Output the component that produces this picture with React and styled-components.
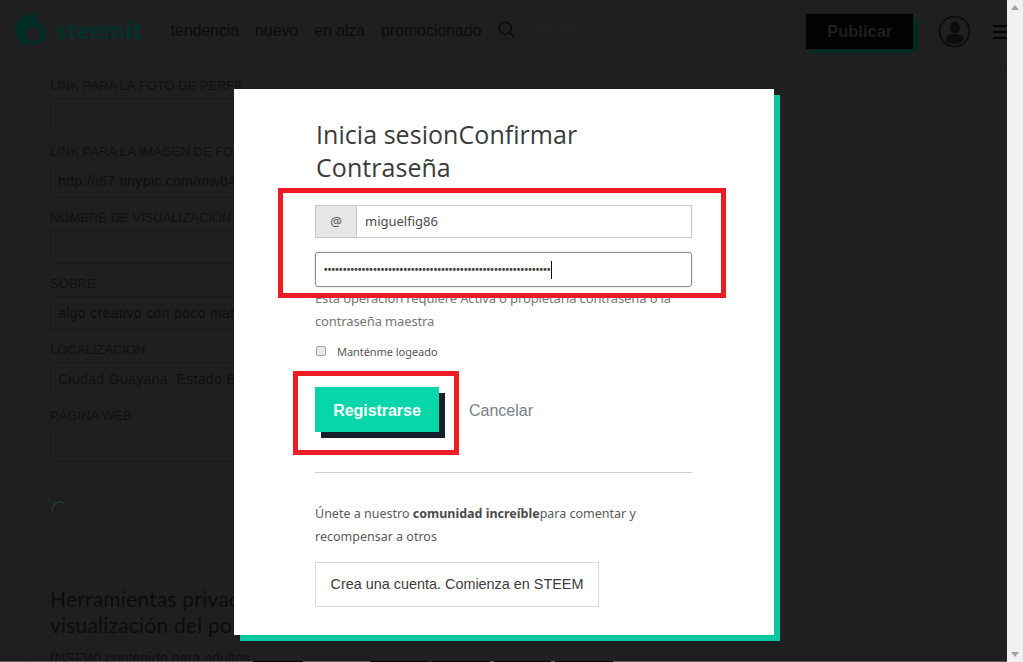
import React from "react";
import styled, { createGlobalStyle } from "styled-components";

const Global = createGlobalStyle`
  html, body { margin: 0; padding: 0; height: 662px; overflow: hidden; background: #1f1f1f; }
  * { box-sizing: border-box; }
`;

const Window = styled.div`
  display: flex;
  width: 1023px;
  height: 662px;
  overflow: hidden;
`;

const Viewport = styled.div`
  position: relative;
  width: 1007px;
  height: 662px;
  overflow: hidden;
  background: #1f1f1f;
`;

const EdgeStrip = styled.div`
  position: absolute;
  left: 0;
  right: 0;
  bottom: 0;
  height: 1px;
  background: #5c5c5c;
  display: flex;
  padding-left: 253px;
`;

const EdgeGap = styled.i`
  display: block;
  height: 1px;
  background: #050505;
  width: ${(p) => p.$w}px;
  margin-right: ${(p) => p.$after}px;
`;

const Scrollbar = styled.div`
  width: 16px;
  height: 662px;
  background: #f1f1f1;
  display: flex;
  flex-direction: column;
  justify-content: space-between;
  align-items: center;
  padding: 5px 0;
`;

const Arrow = styled.div`
  width: 0;
  height: 0;
  border-left: 4px solid transparent;
  border-right: 4px solid transparent;
  ${(p) => (p.$down ? "border-top: 5px solid #a3a3a3;" : "border-bottom: 5px solid #a3a3a3;")}
`;

const Header = styled.header`
  height: 65px;
  display: flex;
  align-items: center;
  padding-left: 14px;
  border-bottom: 1px solid #1b1b1b;
  font-family: "Liberation Sans", Arial, sans-serif;
`;

const Brand = styled.div`
  display: flex;
  align-items: center;
  gap: 9px;
  width: 157px;
  margin-top: -3px;
`;

const BrandName = styled.span`
  font-size: 22.5px;
  font-weight: 700;
  color: #03302a;
  font-family: "Open Sans", sans-serif;
`;

const Nav = styled.nav`
  display: flex;
  gap: 16px;
  align-items: center;
  margin-top: -3px;
`;

const NavLink = styled.span`
  font-size: 16px;
  color: #0d0d0d;
  white-space: nowrap;
  letter-spacing: -0.1px;
`;

const SearchGroup = styled.div`
  display: flex;
  align-items: center;
  margin-left: 17px;
  margin-top: -5px;
  gap: 22px;
  width: 309px;
`;

const SearchHint = styled.span`
  font-size: 14px;
  color: #232323;
`;

const PublishButton = styled.div`
  width: 107px;
  height: 35px;
  background: #020202;
  box-shadow: 5px 4px 0 #032a22;
  color: #1e1e1e;
  font-weight: 700;
  font-size: 16.5px;
  display: flex;
  align-items: center;
  justify-content: center;
  margin-top: -2px;
`;

const AvatarWrap = styled.div`
  margin-left: 25px;
  margin-top: -2px;
  display: flex;
`;

const Burger = styled.div`
  width: 14px;
  height: 14px;
  margin-left: 22px;
  display: flex;
  flex-direction: column;
  justify-content: space-between;
`;

const BurgerBar = styled.i`
  display: block;
  height: 2px;
  background: #050505;
`;

const Form = styled.main`
  position: relative;
  padding: 13px 0 0 50px;
  width: 400px;
  &::before {
    content: "";
    position: absolute;
    left: 27px;
    top: 0;
    bottom: -400px;
    width: 1px;
    background: #1c1c1c;
  }
`;

const Field = styled.div`
  height: 66px;
`;

const FieldLabel = styled.div`
  font: 13px/14px "Liberation Sans", Arial, sans-serif;
  color: #111;
  height: 20px;
  padding-top: 1px;
  text-transform: uppercase;
  white-space: nowrap;
`;

const FieldBox = styled.div`
  height: 34px;
  width: 380px;
  border: 1px solid #191919;
  border-radius: 2px;
  padding-left: 7px;
  font: 14px/32px "Liberation Sans", Arial, sans-serif;
  letter-spacing: 0.35px;
  color: #0f0f0f;
  white-space: nowrap;
`;

const SpinnerWrap = styled.div`
  margin: 27px 0 0 1px;
  height: 20px;
  display: flex;
`;

const PrivacyHeading = styled.h2`
  margin: 65px 0 0;
  font: 400 21px/26px Lato, sans-serif;
  color: #0c0c0c;
  letter-spacing: 0.2px;
  width: 180px;
  white-space: nowrap;
`;

const PrivacyNote = styled.p`
  margin: 11px 0 0;
  font: 14.3px/18px "Liberation Sans", Arial, sans-serif;
  color: #0f0f0f;
  white-space: nowrap;
`;

const Dialog = styled.section`
  position: absolute;
  left: 234px;
  top: 89px;
  width: 540px;
  height: 546px;
  background: #fff;
  box-shadow: 6px 6px 0 #06c79f;
  padding: 29px 82px 0 81px;
  font-family: "Noto Sans", sans-serif;
  color: #444;
`;

const Title = styled.h1`
  margin: 0 0 21px 1px;
  font: 400 25px/33px "Open Sans", sans-serif;
  color: #3a3a3a;
  letter-spacing: 0.05px;
  width: 300px;
`;

const UserRow = styled.div`
  display: flex;
  height: 33px;
  border: 1px solid #c9c9c9;
  font: 13px/31px "Noto Sans", sans-serif;
  color: #4a4a4a;
`;

const Addon = styled.span`
  width: 41px;
  background: #e6e6e6;
  border-right: 1px solid #c9c9c9;
  text-align: center;
  color: #555;
  font-size: 13px;
`;

const UserValue = styled.span`
  padding-left: 8px;
`;

const PasswordRow = styled.div`
  margin-top: 14px;
  height: 35px;
  border: 1px solid #8f8f8f;
  border-radius: 3px;
  box-shadow: 0 0 2px rgba(0, 0, 0, 0.25);
  padding-left: 8px;
  display: flex;
  align-items: center;
`;

const Dots = styled.span`
  font: 700 10px/10px "Liberation Sans", Arial, sans-serif;
  letter-spacing: 0.28px;
  color: #444;
  white-space: nowrap;
  width: 227px;
  overflow: hidden;
`;

const Caret = styled.i`
  display: block;
  width: 1px;
  height: 18px;
  background: #111;
`;

const Help = styled.p`
  margin: 0;
  height: 47px;
  font: 13px/23px "Noto Sans", sans-serif;
  color: #777;
  letter-spacing: -0.13px;
  white-space: nowrap;
`;

const KeepRow = styled.label`
  display: flex;
  align-items: center;
  height: 20px;
  margin-top: 8px;
  font: 11px/20px "Noto Sans", sans-serif;
  color: #555;
  letter-spacing: -0.05px;
`;

const Check = styled.span`
  width: 10px;
  height: 10px;
  margin: -2px 11px 0 1px;
  border: 1px solid #a5a5a5;
  border-radius: 2px;
  background: #e8e8e8;
`;

const Actions = styled.div`
  display: flex;
  align-items: flex-start;
  height: 45px;
  margin-top: 25px;
`;

const PrimaryButton = styled.div`
  width: 124px;
  height: 45px;
  background: #06d6a9;
  box-shadow: 6px 6px 0 #15202b;
  color: #fff;
  font: 700 16px/47px "Liberation Sans", Arial, sans-serif;
  text-align: center;
  letter-spacing: -0.05px;
`;

const CancelLink = styled.span`
  margin-left: 30px;
  font: 16px/47px "Liberation Sans", Arial, sans-serif;
  color: #788187;
`;

const Rule = styled.hr`
  margin: 40px 0 0;
  border: 0;
  border-top: 1px solid #cfcfcf;
`;

const Invite = styled.p`
  margin: 29px 0 0;
  font: 12.5px/23px "Noto Sans", sans-serif;
  color: #5a5a5a;
  white-space: nowrap;
  b { color: #4a4a4a; font-weight: 700; }
`;

const SignupBox = styled.div`
  margin-top: 14px;
  width: 284px;
  height: 45px;
  border: 1px solid #dcdcdc;
  font: 14.4px/43px "Liberation Sans", Arial, sans-serif;
  color: #3c3c3c;
  text-align: center;
  white-space: nowrap;
`;

const Callout = styled.div`
  position: absolute;
  border: 5px solid #ed1c24;
  pointer-events: none;
  left: ${(p) => p.$x}px;
  top: ${(p) => p.$y}px;
  width: ${(p) => p.$w}px;
  height: ${(p) => p.$h}px;
`;

const Logo = () => (
  <svg width="33" height="33" viewBox="0 0 33 33" fill="none">
    <path
      fillRule="evenodd"
      d="M24 1 C14 -1 2 3 0.6 14 C0 20 3 25 7.5 27.5 L5.5 32 L12.5 29.5 C18 32.5 26 31.5 30 26 C34 20 32 11.5 25.5 8.5 C22 7 20 5 24 1 Z
         M18.5 13 C22.5 13 25.5 16 25.5 20 C25.5 24 22.5 27 18.5 27 C15.5 27 13 25.5 12 23 C14 22.5 13 20.5 13 18.5 C13 15.5 15.5 13 18.5 13 Z"
      fill="#032c26"
    />
  </svg>
);

const SearchIcon = () => (
  <svg width="18" height="18" viewBox="0 0 18 18" fill="none" stroke="#0b0b0b" strokeWidth="1.4">
    <circle cx="7.2" cy="7.2" r="6" />
    <path d="M11.6 11.6 L17 17" />
  </svg>
);

const AvatarIcon = () => (
  <svg width="33" height="33" viewBox="0 0 33 33" fill="none">
    <circle cx="16.5" cy="16.5" r="15" stroke="#0c0c0c" strokeWidth="1.6" />
    <ellipse cx="17" cy="12.5" rx="5" ry="6" fill="#0c0c0c" />
    <ellipse cx="16.5" cy="24" rx="9" ry="5" fill="#0c0c0c" />
  </svg>
);

const Spinner = () => (
  <svg width="18" height="18" viewBox="0 0 18 18" fill="none">
    <path d="M1.3 10.5 A7.8 7.8 0 0 1 14.2 3.2" stroke="#1f3a35" strokeWidth="1.5" />
  </svg>
);

const fields = [
  ["Link para la foto de perfil", ""],
  ["Link para la imagen de fondo", "http://i67.tinypic.com/mwb4s"],
  ["Nombre de visualización", ""],
  ["Sobre", "algo creativo con poco material"],
  ["Localización", "Ciudad Guayana, Estado Bolívar"],
  ["Página web", ""],
];

const nav = ["tendencia", "nuevo", "en alza", "promocionado"];
const edgeGaps = [
  [50, 67],
  [60, 1],
  [59, 4],
  [57, 4],
  [58, 0],
];

export default function App() {
  return (
    <Window>
      <Global />
      <Viewport>
        <Header>
          <Brand>
            <Logo />
            <BrandName>steemit</BrandName>
          </Brand>
          <Nav>
            {nav.map((n) => (
              <NavLink key={n}>{n}</NavLink>
            ))}
          </Nav>
          <SearchGroup>
            <SearchIcon />
            <SearchHint>search</SearchHint>
          </SearchGroup>
          <PublishButton>Publicar</PublishButton>
          <AvatarWrap>
            <AvatarIcon />
          </AvatarWrap>
          <Burger>
            <BurgerBar />
            <BurgerBar />
            <BurgerBar />
          </Burger>
        </Header>
        <Form>
          {fields.map(([label, value]) => (
            <Field key={label}>
              <FieldLabel>{label}</FieldLabel>
              <FieldBox>{value}</FieldBox>
            </Field>
          ))}
          <SpinnerWrap>
            <Spinner />
          </SpinnerWrap>
          <PrivacyHeading>
            Herramientas privacidad
            <br />
            visualización del post
          </PrivacyHeading>
          <PrivacyNote>(NSFW) contenido para adultos</PrivacyNote>
        </Form>
        <Dialog>
          <Title>Inicia sesionConfirmar Contraseña</Title>
          <UserRow>
            <Addon>@</Addon>
            <UserValue>miguelfig86</UserValue>
          </UserRow>
          <PasswordRow>
            <Dots>{"•".repeat(60)}</Dots>
            <Caret />
          </PasswordRow>
          <Help>
            Esta operación requiere Activa o propietaria contraseña o la
            <br />
            contraseña maestra
          </Help>
          <KeepRow>
            <Check />
            Manténme logeado
          </KeepRow>
          <Actions>
            <PrimaryButton>Registrarse</PrimaryButton>
            <CancelLink>Cancelar</CancelLink>
          </Actions>
          <Rule />
          <Invite>
            Únete a nuestro <b>comunidad increíble</b>para comentar y
            <br />
            recompensar a otros
          </Invite>
          <SignupBox>Crea una cuenta. Comienza en STEEM</SignupBox>
        </Dialog>
        <Callout $x={278} $y={188} $w={448} $h={110} />
        <Callout $x={293} $y={371} $w={166} $h={84} />
        <EdgeStrip>
          {edgeGaps.map(([w, after], i) => (
            <EdgeGap key={i} $w={w} $after={after} />
          ))}
        </EdgeStrip>
      </Viewport>
      <Scrollbar>
        <Arrow />
        <Arrow $down />
      </Scrollbar>
    </Window>
  );
}
